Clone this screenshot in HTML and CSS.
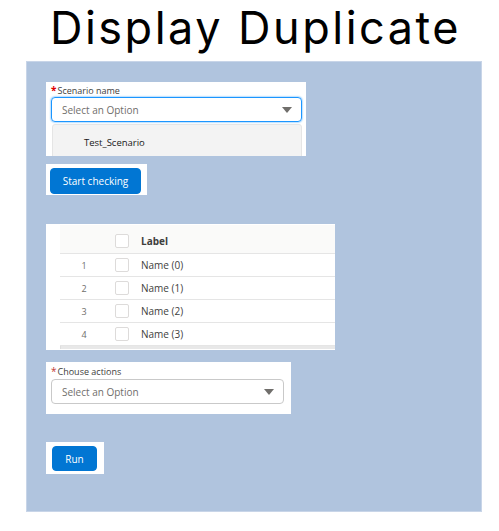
FILE: index.html
```html
<!DOCTYPE html>
<html>
<head>
<meta charset="utf-8">
<link rel="stylesheet" href="styles.css">
</head>
<body>
<h1 class="title">Display Duplicate</h1>
<div class="panel">
  <div class="card scenario">
    <div class="label"><span class="req">*</span>Scenario name</div>
    <div class="select focus"><span>Select an Option</span><span class="arrow"></span></div>
    <div class="listbox"><div class="option">Test_Scenario</div></div>
  </div>
  <div class="card btncard start">
    <button class="btn">Start checking</button>
  </div>
  <div class="card tablecard">
    <div class="table">
      <div class="row head">
        <div class="c-num"></div>
        <div class="c-chk"><span class="box"></span></div>
        <div class="c-label">Label</div>
      </div>
      <div class="row"><div class="c-num">1</div><div class="c-chk"><span class="box"></span></div><div class="c-label">Name (0)</div></div>
      <div class="row"><div class="c-num">2</div><div class="c-chk"><span class="box"></span></div><div class="c-label">Name (1)</div></div>
      <div class="row"><div class="c-num">3</div><div class="c-chk"><span class="box"></span></div><div class="c-label">Name (2)</div></div>
      <div class="row"><div class="c-num">4</div><div class="c-chk"><span class="box"></span></div><div class="c-label">Name (3)</div></div>
      <div class="scrollbar"></div>
    </div>
  </div>
  <div class="card actions">
    <div class="label"><span class="req small">*</span>Chouse actions</div>
    <div class="select"><span>Select an Option</span><span class="arrow"></span></div>
  </div>
  <div class="card btncard run">
    <button class="btn">Run</button>
  </div>
</div>
</body>
</html>
```
FILE: styles.css
```css
html, body {
  margin: 0;
  padding: 0;
  background: #ffffff;
}
body {
  font-family: "Open Sans", "Liberation Sans", sans-serif;
  color: #3e3e3c;
}
.title {
  margin: 0;
  height: 61px;
  box-sizing: border-box;
  padding: 0 0 0 12px;
  font-family: Inter, "Liberation Sans", sans-serif;
  font-weight: 400;
  font-size: 45px;
  line-height: normal;
  letter-spacing: 2.5px;
  color: #000;
  text-align: center;
  white-space: nowrap;
}
.panel {
  margin-left: 26px;
  width: 456px;
  height: 451px;
  box-sizing: border-box;
  background: #b0c4de;
  border: 1px solid #c8d5e8;
  padding: 20px 0 0 19px;
  display: flex;
  flex-direction: column;
  align-items: flex-start;
}
.card {
  background: #fff;
  box-sizing: border-box;
}
.scenario {
  width: 260px;
  height: 74px;
  padding: 2px 4px 0 5px;
  overflow: hidden;
}
.label {
  font-size: 9px;
  line-height: 13px;
  color: #3e3e3c;
}
.req {
  color: #e00000;
  font-weight: 700;
  font-size: 10px;
  margin-right: 1px;
}
.req.small {
  font-weight: 400;
  color: #c23934;
}
.select {
  box-sizing: border-box;
  height: 25px;
  border: 1px solid #c9c9c9;
  border-radius: 4px;
  display: flex;
  align-items: center;
  justify-content: space-between;
  padding: 0 9px 0 10px;
  font-size: 10px;
  color: #706e6b;
}
.select.focus {
  border-color: #1b96ff;
  box-shadow: 0 0 2px #1b96ff;
}
.arrow {
  width: 0;
  height: 0;
  border-left: 5px solid transparent;
  border-right: 5px solid transparent;
  border-top: 6px solid #706e6b;
}
.listbox {
  margin: 2px 0 0 1px;
  height: 34px;
  background: #f3f3f3;
  border: 1px solid #e5e5e5;
  border-radius: 3px 3px 0 0;
  box-sizing: border-box;
}
.option {
  padding: 11px 0 0 31px;
  font-size: 9.5px;
  color: #181818;
}
.btncard {
  margin-top: 8px;
}
.start {
  width: 101px;
  height: 31px;
  padding: 4px 0 0 4px;
}
.btn {
  display: block;
  margin: 0;
  border: 1px solid #0176d3;
  background: #0176d3;
  color: #fff;
  border-radius: 4px;
  font-family: "Open Sans", "Liberation Sans", sans-serif;
  font-size: 10px;
  padding: 0;
  cursor: pointer;
}
.start .btn {
  width: 91px;
  height: 26px;
}
.tablecard {
  margin-top: 29px;
  width: 289px;
  height: 126px;
  padding: 1px 0 0 14px;
}
.table {
  width: 275px;
}
.row {
  display: flex;
  height: 23px;
  align-items: center;
  border-bottom: 1px solid #e5e5e5;
  box-sizing: border-box;
  font-size: 10px;
  color: #3e3e3c;
}
.row.head {
  height: 29px;
  padding-top: 3px;
  background: #fafaf9;
  font-weight: 700;
}
.c-num {
  width: 48px;
  text-align: center;
  color: #706e6b;
  font-size: 9px;
}
.c-chk {
  width: 33px;
  display: flex;
  align-items: center;
  padding-left: 7px;
  box-sizing: border-box;
}
.box {
  width: 12px;
  height: 12px;
  border: 1px solid #dddbda;
  border-radius: 2px;
  background: #fff;
}
.scrollbar {
  height: 3px;
  background: #e8e8e8;
  border-left: 1px solid #dedede;
}
.actions {
  margin-top: 12px;
  width: 245px;
  height: 52px;
  padding: 3px 7px 0 5px;
}
.actions .label {
  margin-bottom: 1px;
}
.run {
  margin-top: 28px;
  width: 58px;
  height: 32px;
  padding: 4px 0 0 6px;
}
.run .btn {
  width: 45px;
  height: 25px;
}
```
